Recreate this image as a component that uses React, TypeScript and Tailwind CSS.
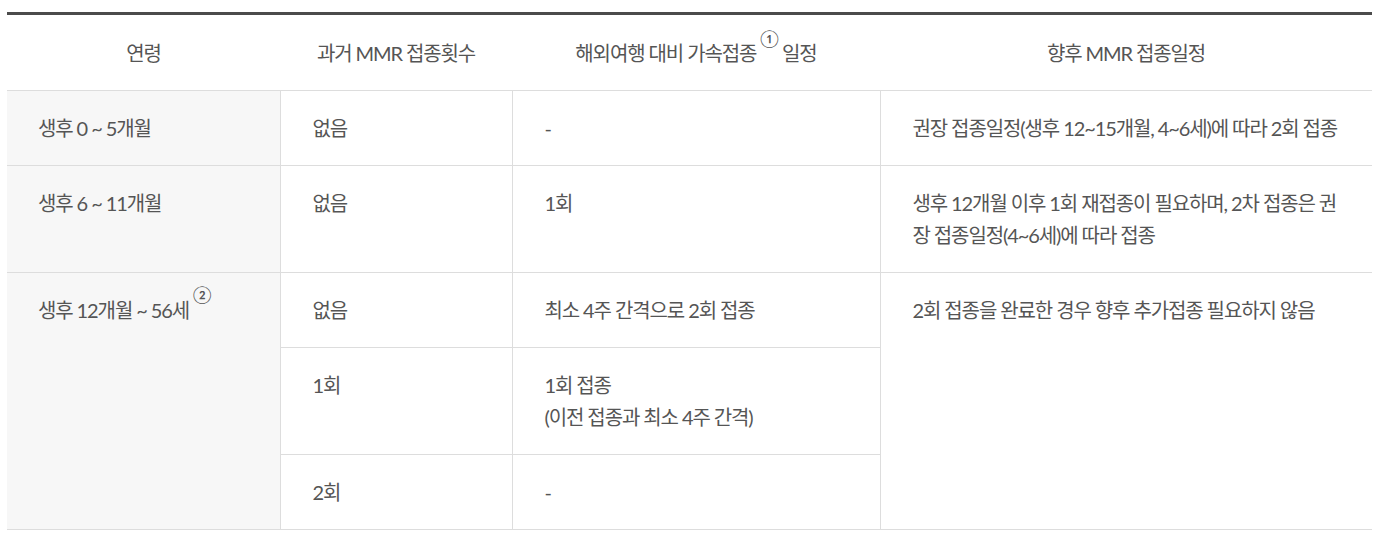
import React from "react";

const font = {
  fontFamily: '"Lato", "Noto Sans CJK KR", sans-serif',
};

function Sup({ n }: { n: string }) {
  return (
    <sup className="relative -top-[8px] ml-[4px] mr-[4px] text-[17px] align-top leading-none">{n}</sup>
  );
}

export default function App() {
  const th = "h-[77px] border-b border-[#dddddd] text-center font-normal align-middle p-0";
  const td = "border-b border-l border-[#dddddd] align-top pt-[21px] pb-[21px] px-8 leading-[32px]";
  const tdFirst = "border-b border-[#dddddd] align-top pt-[21px] pb-[21px] pl-[31px] pr-4 leading-[32px] bg-[#f7f7f7]";
  return (
    <div className="bg-white w-[1386px] h-[538px] pt-[12px] px-[7px]" style={font}>
      <table className="w-[1365px] border-collapse table-fixed border-t-[3px] border-t-[#4b4b4b] text-[20px] text-[#555555] tracking-[-0.055em]">
        <colgroup>
          <col className="w-[273px]" />
          <col className="w-[232px]" />
          <col className="w-[368px]" />
          <col className="w-[492px]" />
        </colgroup>
        <thead>
          <tr>
            <th className={th}>연령</th>
            <th className={th}>과거 MMR 접종횟수</th>
            <th className={th}>
              해외여행 대비 가속접종<Sup n="①" />일정
            </th>
            <th className={th}>향후 MMR 접종일정</th>
          </tr>
        </thead>
        <tbody>
          <tr>
            <td className={tdFirst}>생후 0 ~ 5개월</td>
            <td className={td}>없음</td>
            <td className={td}>-</td>
            <td className={td}>권장 접종일정(생후 12~15개월, 4~6세)에 따라 2회 접종</td>
          </tr>
          <tr>
            <td className={tdFirst}>생후 6 ~ 11개월</td>
            <td className={td}>없음</td>
            <td className={td}>1회</td>
            <td className={td}>생후 12개월 이후 1회 재접종이 필요하며, 2차 접종은 권장 접종일정(4~6세)에 따라 접종</td>
          </tr>
          <tr>
            <td className={tdFirst} rowSpan={3}>
              생후 12개월 ~ 56세<Sup n="②" />
            </td>
            <td className={td}>없음</td>
            <td className={td}>최소 4주 간격으로 2회 접종</td>
            <td className={td} rowSpan={3}>2회 접종을 완료한 경우 향후 추가접종 필요하지 않음</td>
          </tr>
          <tr>
            <td className={td}>1회</td>
            <td className={td}>
              1회 접종
              <br />
              (이전 접종과 최소 4주 간격)
            </td>
          </tr>
          <tr>
            <td className={td}>2회</td>
            <td className={td}>-</td>
          </tr>
        </tbody>
      </table>
    </div>
  );
}
